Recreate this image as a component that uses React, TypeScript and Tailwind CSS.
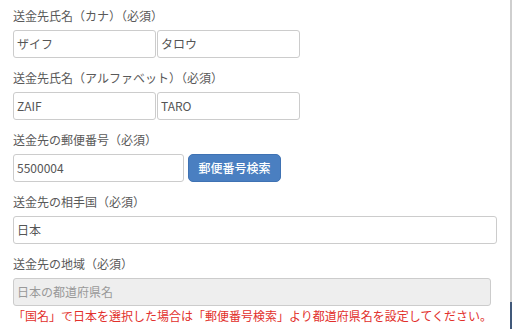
const font = { fontFamily: '"Noto Sans CJK JP", "Noto Sans", sans-serif' };

function Label({ children }: { children: React.ReactNode }) {
  return <div className="mb-[6px] text-[12px] leading-4 text-[#595959]">{children}</div>;
}

function Field({
  value,
  className,
  disabled,
}: {
  value: string;
  className: string;
  disabled?: boolean;
}) {
  return (
    <div
      className={
        "flex h-[28px] items-center rounded-[3px] border border-[#ccc] px-[3px] text-[12px] " +
        (disabled ? "bg-[#eee] text-[#999] " : "bg-white text-[#555] ") +
        className
      }
    >
      {value}
    </div>
  );
}

export default function App() {
  return (
    <div className="flex h-[329px] w-[512px] overflow-hidden bg-white" style={font}>
      <div className="flex w-[510px] flex-col pl-[13px] pt-[8px]">
        <Label>送金先氏名（カナ）（必須）</Label>
        <div className="flex gap-px">
          <Field value="ザイフ" className="w-[143px]" />
          <Field value="タロウ" className="w-[143px]" />
        </div>

        <div className="mt-[12px]">
          <Label>送金先氏名（アルファベット）（必須）</Label>
          <div className="flex gap-px">
            <Field value="ZAIF" className="w-[143px]" />
            <Field value="TARO" className="w-[143px]" />
          </div>
        </div>

        <div className="mt-[12px]">
          <Label>送金先の郵便番号（必須）</Label>
          <div className="flex gap-[4px]">
            <Field value="5500004" className="w-[171px]" />
            <button className="h-[28px] w-[93px] rounded-[5px] border border-[#3f72b3] bg-[#4a7fc1] text-[12px] font-medium text-white">
              郵便番号検索
            </button>
          </div>
        </div>

        <div className="mt-[12px]">
          <Label>送金先の相手国（必須）</Label>
          <Field value="日本" className="w-[484px]" />
        </div>

        <div className="mt-[12px]">
          <Label>送金先の地域（必須）</Label>
          <Field value="日本の都道府県名" className="w-[478px]" disabled />
          <div className="mt-[2px] text-[12px] leading-4 text-[#e2302c]">
            「国名」で日本を選択した場合は「郵便番号検索」より都道府県名を設定してください。
          </div>
        </div>
      </div>
      <div className="flex w-[2px] flex-col">
        <div className="flex-1 bg-[#cfcfcf]" />
        <div className="h-[27px] bg-[#41597a]" />
      </div>
    </div>
  );
}
